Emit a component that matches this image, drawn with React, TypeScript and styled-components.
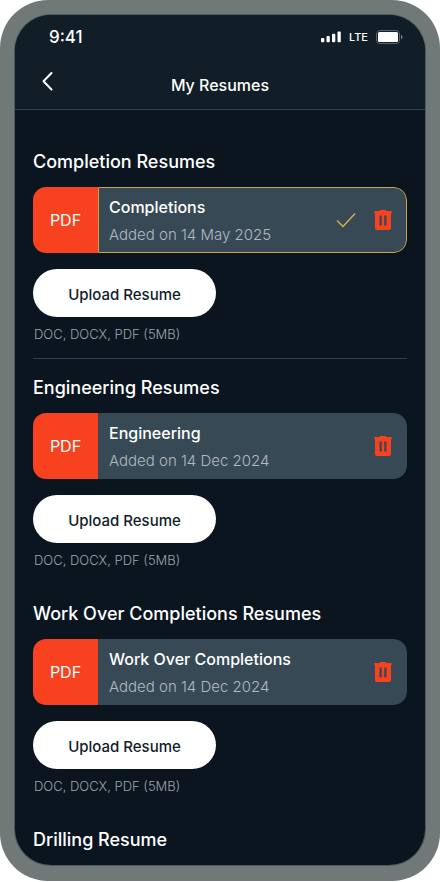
import React from "react";
import styled, { createGlobalStyle } from "styled-components";

const GlobalStyle = createGlobalStyle`
  *, *::before, *::after { box-sizing: border-box; }
  body {
    margin: 0;
    background: #ffffff;
    font-family: Inter, "Open Sans", sans-serif;
    -webkit-font-smoothing: antialiased;
  }
`;

const Device = styled.div`
  padding: 15px 15px 16px;
  border-radius: 48px;
  background: #707977;
`;

const Screen = styled.div`
  overflow: hidden;
  border-radius: 36px;
  background: #0b1520;
  box-shadow: 0 0 0 1px #4a5b5b;
  color: #ffffff;
`;

const Header = styled.header`
  padding-top: 11px;
  background: #111e27;
  border-bottom: 1px solid #32434d;
`;

const StatusBar = styled.div`
  display: flex;
  align-items: center;
  justify-content: space-between;
  height: 22px;
  padding: 0 22px 0 34px;
`;

const Clock = styled.time`
  font-size: 17px;
  line-height: 22px;
  font-weight: 500;
`;

const StatusIcons = styled.div`
  display: flex;
  align-items: center;
  gap: 8px;
`;

const Network = styled.span`
  font-size: 11px;
  line-height: 16px;
  font-weight: 500;
`;

const NavBar = styled.nav`
  display: grid;
  grid-template-columns: 40px 1fr 40px;
  align-items: center;
  height: 61px;
  padding: 12px 12px 0;
`;

const BackButton = styled.button`
  display: grid;
  place-items: center;
  width: 40px;
  height: 40px;
  padding: 0 0 8px;
  border: 0;
  background: none;
  color: #ffffff;
`;

const PageTitle = styled.h1`
  margin: 0;
  font-size: 16px;
  line-height: 24px;
  font-weight: 500;
  text-align: center;
`;

const Content = styled.main`
  padding: 40px 18px 13px;
`;

const Section = styled.section<{ $divided?: boolean }>`
  padding-bottom: 14px;
  margin-bottom: 17px;
  border-bottom: 1px solid ${(p) => (p.$divided ? "#2f404b" : "transparent")};

  &:last-child {
    padding: 0;
    margin: 0;
    border: 0;
  }
`;

const SectionTitle = styled.h2`
  margin: 0;
  font-size: 18px;
  line-height: 24px;
  font-weight: 500;
`;

const Card = styled.article`
  display: flex;
  height: 66px;
  margin: 13px 0 16px;
  border-radius: 13px;
  overflow: hidden;
`;

const FileType = styled.div`
  display: grid;
  place-items: center;
  width: 65px;
  background: #f8411f;
  font-size: 16px;
  font-weight: 400;
`;

const CardBody = styled.div<{ $selected?: boolean }>`
  flex: 1;
  display: flex;
  align-items: center;
  gap: 18px;
  padding: 0 14px 0 10px;
  border: 1px solid ${(p) => (p.$selected ? "#cfa04a" : "#384956")};
  border-radius: 0 13px 13px 0;
  background: #384956;
`;

const Details = styled.div`
  flex: 1;
  padding-top: 2px;
`;

const FileName = styled.h3`
  margin: 0;
  font-size: 16px;
  line-height: 28px;
  font-weight: 500;
`;

const Added = styled.p`
  margin: 0;
  color: #b0b9c0;
  font-size: 15px;
  line-height: 28px;
  font-weight: 300;
`;

const DeleteButton = styled.button`
  display: block;
  padding: 0;
  border: 0;
  background: none;
  color: #f8411f;

  svg { display: block; }
`;

const UploadButton = styled.button`
  display: block;
  height: 48px;
  min-width: 183px;
  padding: 2px 32px 0;
  border: 0;
  border-radius: 24px;
  background: #ffffff;
  color: #111b2b;
  font-family: inherit;
  font-size: 15px;
  font-weight: 500;
`;

const Formats = styled.p`
  margin: 7px 0 0 1px;
  color: #9da4aa;
  font-size: 13px;
  line-height: 20px;
  font-weight: 300;
`;

const SignalIcon = () => (
  <svg width="20" height="12" viewBox="0 0 20 12" fill="currentColor" aria-hidden="true">
    <rect x="0" y="7" width="3.3" height="4.2" rx="1" />
    <rect x="5.5" y="5" width="3.3" height="6.2" rx="1" />
    <rect x="11" y="2.8" width="3.3" height="8.4" rx="1" />
    <rect x="16.5" y="0.4" width="3.3" height="10.8" rx="1" />
  </svg>
);

const BatteryIcon = () => (
  <svg width="27" height="14" viewBox="0 0 27 14" aria-hidden="true">
    <rect x="0.5" y="0.5" width="23" height="13" rx="3.5" fill="none" stroke="#59646b" />
    <rect x="2" y="2" width="20" height="10" rx="1.5" fill="#fff" />
    <path d="M25 5v4.400c.9-.4 1.500-1.200 1.500-2.200S25.900 5.400 25 5z" fill="#7b8489" />
  </svg>
);

const BackIcon = () => (
  <svg width="12" height="20" viewBox="0 0 12 20" fill="none" aria-hidden="true">
    <path d="M10.500 2L2.500 10.300L10.500 18.500" stroke="currentColor" strokeWidth="2" strokeLinecap="round" strokeLinejoin="round" />
  </svg>
);

const CheckIcon = () => (
  <svg width="20" height="16" viewBox="0 0 20 16" fill="none" role="img" aria-label="Selected">
    <path d="M1 8.500L7 14.500L19 1.500" stroke="#d9a94c" strokeWidth="1.500" />
  </svg>
);

const TrashIcon = () => (
  <svg width="18" height="20" viewBox="0 0 18 20" aria-hidden="true">
    <path
      fill="currentColor"
      fillRule="evenodd"
      d="M6 0h6v1h5.700v2.300H17V18q0 2-2 2H3q-2 0-2-2V3.300H.3V1H6zM5.500 5.500v10h2.300v-10zM10.200 5.500v10h2.300v-10z"
    />
  </svg>
);

const resumes = [
  { title: "Completion Resumes", name: "Completions", date: "14 May 2025", selected: true, divided: true },
  { title: "Engineering Resumes", name: "Engineering", date: "14 Dec 2024" },
  { title: "Work Over Completions Resumes", name: "Work Over Completions", date: "14 Dec 2024" },
];

export default function App() {
  return (
    <>
      <GlobalStyle />
      <Device>
        <Screen>
          <Header>
            <StatusBar>
              <Clock>9:41</Clock>
              <StatusIcons>
                <SignalIcon />
                <Network>LTE</Network>
                <BatteryIcon />
              </StatusIcons>
            </StatusBar>
            <NavBar>
              <BackButton type="button" aria-label="Back">
                <BackIcon />
              </BackButton>
              <PageTitle>My Resumes</PageTitle>
            </NavBar>
          </Header>
          <Content>
            {resumes.map((r) => (
              <Section key={r.title} $divided={r.divided}>
                <SectionTitle>{r.title}</SectionTitle>
                <Card>
                  <FileType>PDF</FileType>
                  <CardBody $selected={r.selected}>
                    <Details>
                      <FileName>{r.name}</FileName>
                      <Added>Added on {r.date}</Added>
                    </Details>
                    {r.selected && <CheckIcon />}
                    <DeleteButton type="button" aria-label={`Delete ${r.name}`}>
                      <TrashIcon />
                    </DeleteButton>
                  </CardBody>
                </Card>
                <UploadButton type="button">Upload Resume</UploadButton>
                <Formats>DOC, DOCX, PDF (5MB)</Formats>
              </Section>
            ))}
            <Section>
              <SectionTitle>Drilling Resume</SectionTitle>
            </Section>
          </Content>
        </Screen>
      </Device>
    </>
  );
}
